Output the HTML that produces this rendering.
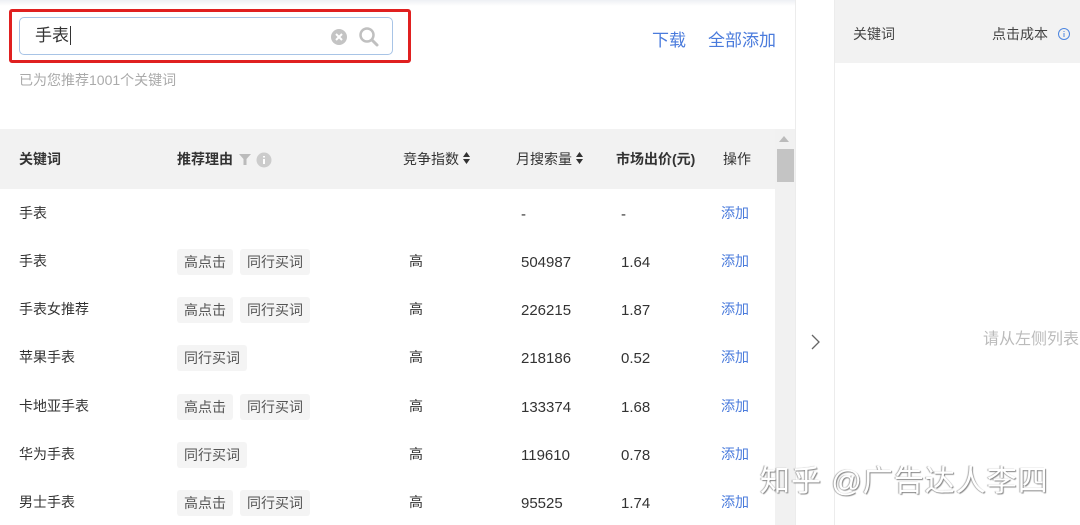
<!DOCTYPE html><html><head><meta charset="utf-8"><style>
body{margin:0;width:1080px;height:525px;overflow:hidden;background:#fff;font-family:"Liberation Sans","Noto Sans CJK SC",sans-serif;position:relative;color:#333}
.a{position:absolute;white-space:nowrap}
.t{font-size:14px;line-height:20px}
.n{font-size:15px;margin-top:2px}
.tag{position:absolute;height:26px;line-height:26px;background:#f4f4f4;border-radius:3px;font-size:14px;color:#555;padding:0 7px}
.blue{color:#4a7bdc}
.sort{display:inline-block;vertical-align:-1px;margin-left:3px}
</style></head><body>
<div class="a" style="left:0;top:0;width:795px;height:6px;background:linear-gradient(#eef0f4,#fff)"></div>
<div class="a" style="left:9px;top:9px;width:402px;height:54px;border:3px solid #e02020;border-radius:3px;box-sizing:border-box"></div>
<div class="a" style="left:19px;top:17px;width:374px;height:38px;border:1px solid #a8c4e6;border-radius:5px;box-sizing:border-box"></div>
<div class="a" style="left:35px;top:25px;font-size:17px;line-height:22px;color:#333">手表<span style="border-left:1px solid #333;margin-left:1px"></span></div>
<svg class="a" style="left:330px;top:28px" width="18" height="18"><circle cx="9" cy="9" r="8" fill="#c4c4c4"/><path d="M6 6l6 6M12 6l-6 6" stroke="#fff" stroke-width="2"/></svg>
<svg class="a" style="left:358px;top:26px" width="22" height="22"><circle cx="9" cy="9" r="6.5" fill="none" stroke="#c0c0c0" stroke-width="2.5"/><path d="M14 14l5 5" stroke="#c0c0c0" stroke-width="3" stroke-linecap="round"/></svg>
<div class="a blue" style="left:652px;top:26px;font-size:17px">下载</div>
<div class="a blue" style="left:708px;top:26px;font-size:17px">全部添加</div>
<div class="a" style="left:19px;top:70px;font-size:14px;color:#aaa">已为您推荐1001个关键词</div>
<div class="a" style="left:0;top:129px;width:775px;height:60px;background:#f2f2f2"></div>
<div class="a" style="left:775px;top:129px;width:20px;height:396px;background:#f1f1f1"></div>
<div class="a" style="left:779px;top:136px;width:0;height:0;border:5px solid transparent;border-bottom:6px solid #bbb;border-top:0"></div>
<div class="a" style="left:777px;top:149px;width:17px;height:33px;background:#c4c4c4"></div>
<div class="a" style="left:795px;top:0;width:1px;height:525px;background:#ececec"></div>
<div class="a" style="left:834px;top:0;width:1px;height:525px;background:#ececec"></div>
<svg class="a" style="left:809px;top:333px" width="14" height="18"><path d="M3 2l7 7-7 7" fill="none" stroke="#666" stroke-width="1.3"/></svg>
<div class="a" style="left:835px;top:0;width:245px;height:63px;background:#f2f2f2"></div>
<div class="a t" style="left:853px;top:24px;color:#444">关键词</div>
<div class="a t" style="left:992px;top:24px;color:#444">点击成本</div>
<svg class="a" style="left:1057px;top:27px" width="14" height="14"><circle cx="7" cy="7" r="5.5" fill="none" stroke="#4d86e0"/><path d="M7 6v4M7 4v1" stroke="#4d86e0"/></svg>
<div class="a" style="left:983px;top:325px;font-size:16px;color:#bbb">请从左侧列表</div>
<div class="a t" style="left:19px;top:149px;font-weight:bold">关键词</div>
<div class="a t" style="left:177px;top:149px;font-weight:bold">推荐理由</div>
<svg class="a" style="left:238px;top:152px" width="36" height="16"><path d="M1 2h12l-4.5 5v6h-3V7z" fill="#bbb"/><circle cx="26" cy="8" r="7.5" fill="#ccc"/><path d="M26 7v5M26 4v1.5" stroke="#fff" stroke-width="2"/></svg>
<div class="a t" style="left:403px;top:149px">竞争指数<svg class="sort" width="9" height="14"><path d="M4.5 1L8 6H1zM4.5 13L8 8H1z" fill="#333"/></svg></div>
<div class="a t" style="left:516px;top:149px">月搜索量<svg class="sort" width="9" height="14"><path d="M4.5 1L8 6H1zM4.5 13L8 8H1z" fill="#333"/></svg></div>
<div class="a t" style="left:616px;top:149px;font-weight:bold">市场出价(元)</div>
<div class="a t" style="left:723px;top:149px">操作</div>
<div class="a t" style="left:19px;top:203px">手表</div><div class="a t n" style="left:521px;top:203px">-</div><div class="a t n" style="left:621px;top:203px">-</div><div class="a t blue" style="left:721px;top:203px">添加</div>

<div class="a t" style="left:19px;top:251px">手表</div><div class="tag" style="left:177px;top:249px">高点击</div><div class="tag" style="left:240px;top:249px">同行买词</div><div class="a t" style="left:409px;top:251px">高</div><div class="a t n" style="left:521px;top:251px">504987</div><div class="a t n" style="left:621px;top:251px">1.64</div><div class="a t blue" style="left:721px;top:251px">添加</div>

<div class="a t" style="left:19px;top:299px">手表女推荐</div><div class="tag" style="left:177px;top:297px">高点击</div><div class="tag" style="left:240px;top:297px">同行买词</div><div class="a t" style="left:409px;top:299px">高</div><div class="a t n" style="left:521px;top:299px">226215</div><div class="a t n" style="left:621px;top:299px">1.87</div><div class="a t blue" style="left:721px;top:299px">添加</div>

<div class="a t" style="left:19px;top:347px">苹果手表</div><div class="tag" style="left:177px;top:345px">同行买词</div><div class="a t" style="left:409px;top:347px">高</div><div class="a t n" style="left:521px;top:347px">218186</div><div class="a t n" style="left:621px;top:347px">0.52</div><div class="a t blue" style="left:721px;top:347px">添加</div>

<div class="a t" style="left:19px;top:396px">卡地亚手表</div><div class="tag" style="left:177px;top:394px">高点击</div><div class="tag" style="left:240px;top:394px">同行买词</div><div class="a t" style="left:409px;top:396px">高</div><div class="a t n" style="left:521px;top:396px">133374</div><div class="a t n" style="left:621px;top:396px">1.68</div><div class="a t blue" style="left:721px;top:396px">添加</div>

<div class="a t" style="left:19px;top:444px">华为手表</div><div class="tag" style="left:177px;top:442px">同行买词</div><div class="a t" style="left:409px;top:444px">高</div><div class="a t n" style="left:521px;top:444px">119610</div><div class="a t n" style="left:621px;top:444px">0.78</div><div class="a t blue" style="left:721px;top:444px">添加</div>

<div class="a t" style="left:19px;top:492px">男士手表</div><div class="tag" style="left:177px;top:490px">高点击</div><div class="tag" style="left:240px;top:490px">同行买词</div><div class="a t" style="left:409px;top:492px">高</div><div class="a t n" style="left:521px;top:492px">95525</div><div class="a t n" style="left:621px;top:492px">1.74</div><div class="a t blue" style="left:721px;top:492px">添加</div>

<div class="a" style="left:760px;top:464px;font-size:30px;line-height:36px;letter-spacing:1px;color:#fff;text-shadow:1px 1px 1px #888,-1px 0 1px #aaa">知乎 @广告达人李四</div>
</body></html>
